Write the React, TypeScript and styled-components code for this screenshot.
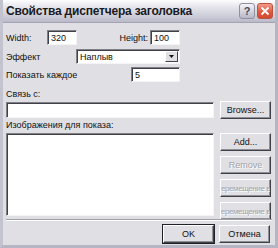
import React from "react";
import styled, { createGlobalStyle } from "styled-components";

const Global = createGlobalStyle`
  html, body { margin: 0; padding: 0; background: #e0dfe3; }
  * { box-sizing: border-box; }
`;

const Window = styled.div`
  width: 278px;
  height: 248px;
  display: flex;
  flex-direction: column;
  background: #e0dfe3;
  border: 3px solid #b6b5c4;
  border-top: none;
  border-left-color: #c3c3cf;
  font-family: "Liberation Sans", Arial, sans-serif;
  overflow: hidden;
`;

const TitleBar = styled.div`
  height: 23px;
  margin: 0 -3px;
  display: flex;
  align-items: center;
  padding: 0 5px 0 6px;
  background: linear-gradient(#fdfdfe 0%, #e3e3ea 35%, #c9c9d6 80%, #b9b9c7 100%);
  border-bottom: 1px solid #a4a3b4;
`;

const Title = styled.div`
  flex: 1;
  font-size: 12px;
  font-weight: bold;
  color: #1a1a22;
  letter-spacing: -0.2px;
`;

const CapButton = styled.div<{ $red?: boolean }>`
  width: 16px;
  height: 16px;
  margin-left: 2px;
  border-radius: 3px;
  border: 1px solid ${(p) => (p.$red ? "#b9523e" : "#8f8fa0")};
  background: ${(p) =>
    p.$red
      ? "linear-gradient(#f29a86, #e0553b 60%, #d24a30)"
      : "linear-gradient(#f6f6f8, #cfcfda 60%, #b8b8c8)"};
  display: flex;
  align-items: center;
  justify-content: center;
  color: ${(p) => (p.$red ? "#fff" : "#4a4a5a")};
  font-size: 11px;
  font-weight: bold;
`;

const Body = styled.div`
  flex: 1;
  display: flex;
  flex-direction: column;
  padding: 7px 4px 0 3px;
  font-size: 9px;
  color: #111;
`;

const Row = styled.div<{ $h?: number; $mt?: number }>`
  display: flex;
  align-items: center;
  height: ${(p) => p.$h ?? 15}px;
  margin-top: ${(p) => p.$mt ?? 0}px;
`;

const Label = styled.div<{ $w?: number; $right?: boolean }>`
  width: ${(p) => (p.$w ? `${p.$w}px` : "auto")};
  flex-shrink: 0;
  white-space: nowrap;
  text-align: ${(p) => (p.$right ? "right" : "left")};
  padding-right: ${(p) => (p.$right ? 2 : 0)}px;
`;

const Field = styled.div<{ $w?: number; $grow?: boolean }>`
  width: ${(p) => (p.$w ? `${p.$w}px` : "auto")};
  flex: ${(p) => (p.$grow ? 1 : "none")};
  height: 100%;
  background: #fff;
  border: 1px solid;
  border-color: #7f7f86 #f4f4f6 #f4f4f6 #7f7f86;
  box-shadow: inset 1px 1px 0 #404048;
  padding: 1px 3px;
  font-size: 9px;
  display: flex;
  align-items: center;
`;

const Arrow = styled.div`
  margin-left: auto;
  width: 13px;
  height: 11px;
  margin-right: -2px;
  background: #e0dfe3;
  border: 1px solid;
  border-color: #fff #404048 #404048 #fff;
  display: flex;
  align-items: center;
  justify-content: center;
`;

const Caption = styled.div<{ $mt: number }>`
  margin-top: ${(p) => p.$mt}px;
  height: 10px;
  line-height: 10px;
  white-space: nowrap;
`;

const Split = styled.div<{ $mt: number; $h: number }>`
  display: flex;
  gap: 6px;
  margin-top: ${(p) => p.$mt}px;
  height: ${(p) => p.$h}px;
`;

const Side = styled.div`
  width: 51px;
  display: flex;
  flex-direction: column;
  gap: 5px;
`;

const Btn = styled.div<{ $disabled?: boolean; $default?: boolean; $w?: number; $tight?: boolean }>`
  width: ${(p) => (p.$w ? `${p.$w}px` : "100%")};
  height: 18px;
  flex-shrink: 0;
  background: #e0dfe3;
  border: 1px solid;
  border-color: #fff #404048 #404048 #fff;
  box-shadow: ${(p) =>
    p.$default ? "0 0 0 1px #202028, inset -1px -1px 0 #8f8f98" : "inset -1px -1px 0 #8f8f98"};
  display: flex;
  align-items: center;
  justify-content: center;
  overflow: hidden;
  white-space: nowrap;
  font-size: ${(p) => (p.$tight ? 8 : 9)}px;
  letter-spacing: ${(p) => (p.$tight ? "-0.4px" : "0")};
  color: ${(p) => (p.$disabled ? "#a2a2aa" : "#111")};
  text-shadow: ${(p) => (p.$disabled ? "1px 1px 0 #fff" : "none")};
`;

const Rule = styled.div`
  margin: 3px -1px 0 0;
  height: 2px;
  border-top: 1px solid #a0a0a8;
  border-bottom: 1px solid #fff;
`;

const Footer = styled.div`
  display: flex;
  justify-content: flex-end;
  gap: 5px;
  margin-top: 4px;
  padding-right: 1px;
`;

export default function App() {
  return (
    <>
      <Global />
      <Window>
        <TitleBar>
          <Title>Свойства диспетчера заголовка</Title>
          <CapButton>?</CapButton>
          <CapButton $red>
            <svg width="10" height="10" viewBox="0 0 10 10">
              <path d="M1.5 1.5 L8.5 8.5 M8.5 1.5 L1.5 8.5" stroke="#fff" strokeWidth="1.8" />
            </svg>
          </CapButton>
        </TitleBar>
        <Body>
          <Row>
            <Label $w={41}>Width:</Label>
            <Field $w={30}>320</Field>
            <Label $w={73} $right>Height:</Label>
            <Field $w={30}>100</Field>
          </Row>
          <Row $mt={4}>
            <Label $w={70}>Эффект</Label>
            <Field $w={104}>
              Наплыв
              <Arrow>
                <svg width="5" height="3" viewBox="0 0 5 3">
                  <path d="M0 0 H5 L2.5 3 Z" fill="#111" />
                </svg>
              </Arrow>
            </Field>
          </Row>
          <Row $mt={3}>
            <Label $w={125}>Показать каждое</Label>
            <Field $w={49}>5</Field>
          </Row>
          <Caption $mt={7}>Связь с:</Caption>
          <Row $h={16} $mt={3}>
            <Field $grow>&nbsp;</Field>
            <Btn $w={51} style={{ marginLeft: 6 }}>Browse...</Btn>
          </Row>
          <Caption $mt={2}>Изображения для показа:</Caption>
          <Split $mt={3} $h={83}>
            <Field $grow />
            <Side>
              <Btn>Add...</Btn>
              <Btn $disabled>Remove</Btn>
              <Btn $disabled $tight>перемещение вв</Btn>
              <Btn $disabled $tight>перемещение вн</Btn>
            </Side>
          </Split>
          <Rule />
          <Footer>
            <Btn $default $w={51}>OK</Btn>
            <Btn $w={51}>Отмена</Btn>
          </Footer>
        </Body>
      </Window>
    </>
  );
}
